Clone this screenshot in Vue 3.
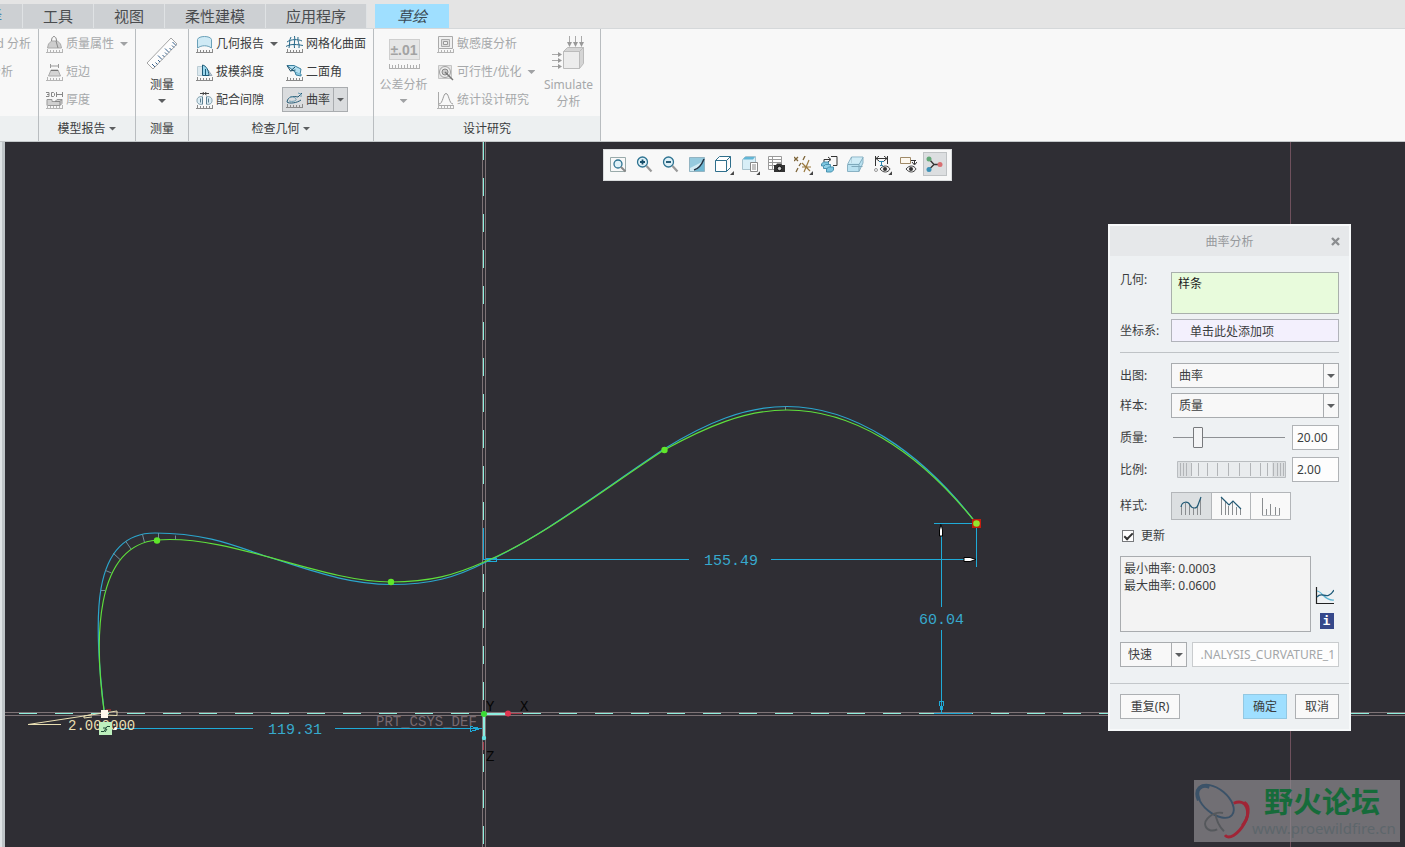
<script setup>
import { ref } from 'vue'

const tabs = ['工具', '视图', '柔性建模', '应用程序']
const ruler = 'M0 16.5H17M1.5 16v-3M4.5 16v-2M7.5 16v-2M10.5 16v-2M13.5 16v-2M16.5 16v-3'

const geometry = ref('样条')
const csys = ref('单击此处添加项')
const plot = ref('曲率')
const sample = ref('质量')
const quality = ref('20.00')
const qualitySlider = ref(20)
const scale = ref('2.00')
const scaleWheel = ref(50)
const update = ref(true)
const result = ref('最小曲率: 0.0003\n最大曲率: 0.0600')
const mode = ref('快速')
const featureName = ref('.NALYSIS_CURVATURE_1')
const wheelTicks = [3, 6, 9, 14, 21, 30, 40, 51, 62, 73, 83, 90, 96, 100, 103, 106]
const combs = 'M113 553l7 6.500M125.500 541l5.500 8M142.500 534.500l2 8M158.500 533v6M175.500 535.500v4M105.500 570.500l6 2.500M101 590.500h4M785.500 406v4'
</script>

<template>
  <div class="app">
    <nav class="tabs">
      <button class="tab cut">择</button>
      <button v-for="t in tabs" :key="t" class="tab">{{ t }}</button>
      <button class="tab active"><em>草绘</em></button>
    </nav>

    <header class="ribbon">
      <section class="group g-cut">
        <div class="g-body rows">
          <button class="cmd off">d 分析</button>
          <button class="cmd off short">分析</button>
        </div>
        <div class="g-label"></div>
      </section>

      <section class="group g-model">
        <div class="g-body rows">
          <button class="cmd off">
            <svg class="ic" viewBox="0 0 17 17"><path d="M1.500 12l1-4 3-3h6l3 3 1 4z" fill="#cdcdcd" stroke="#aaa" /><path d="M5.500 5c0-6 5-6 5 0M10 5l2 7" fill="none" stroke="#888" /><path :d="ruler" class="rl" /></svg>
            <span>质量属性</span><i class="arr"></i>
          </button>
          <button class="cmd off">
            <svg class="ic" viewBox="0 0 17 17"><path d="M4.500 0v4M12.500 0v4M5 2h7" fill="none" stroke="#999" /><path d="M2.500 12l2.500-6h7l2.500 6z" fill="#d4d4d4" stroke="#aaa" /><path d="M5 6.500h7" stroke="#777" /><path :d="ruler" class="rl" /></svg>
            <span>短边</span>
          </button>
          <button class="cmd off">
            <svg class="ic" viewBox="0 0 17 17"><path d="M0 .5h3v4H0M1 2.500h2M5.500 .5h2l1 1v2l-1 1h-2zM10.500 0v5M16.500 0v5M10 2.500h7" fill="none" stroke="#888" /><path d="M1 7.500h5v2h3l2-2h5v4l-2 2H1z" fill="#d0d0d0" stroke="#999" /><path d="M9 9.500h5l2-2M14 9.500v4" fill="none" stroke="#888" /><path :d="ruler" class="rl" /></svg>
            <span>厚度</span>
          </button>
        </div>
        <div class="g-label">模型报告<i class="arr"></i></div>
      </section>

      <section class="group g-measure">
        <div class="g-body">
          <button class="big">
            <svg class="ic-big" viewBox="0 0 34 34"><path d="M2 27L26 2l6 6L8 33z" fill="#fdfdfd" stroke="#a5a5a5" /><path d="M10 31l-3-3M12.500 28.500l-2-2M15 26l-2-2M17 23.500l-4-4M19.500 21l-2-2M22 18.500l-2-2M24 16.500l-4-4M26.500 14l-2-2M29 11.500l-2-2M31 9.500l-3.500-3.500" stroke="#35608c" fill="none" /></svg>
            <span>测量</span><i class="arr"></i>
          </button>
        </div>
        <div class="g-label">测量</div>
      </section>

      <section class="group g-check">
        <div class="g-body columns">
          <div class="rows col-check">
            <button class="cmd">
              <svg class="ic" viewBox="0 0 17 17"><path d="M1.500 12V3.500c1-4 13-4 14 0V12c-4-3-10-3-14 0z" fill="#cfeaf5" stroke="#6aa0b8" /><path :d="ruler" class="rl" /></svg>
              <span>几何报告</span><i class="arr"></i>
            </button>
            <button class="cmd">
              <svg class="ic" viewBox="0 0 17 17"><path d="M1.500 2.500h6v9h-6z" fill="#dce9ef" stroke="#bccdd5" /><path d="M12 6l4 5.500h-3z" fill="#c4d4da" stroke="#9ab" /><path d="M6.500 11.500V1c4 1 6 5 6.500 10.500z" fill="#9bd6ec" stroke="#1d5b78" /><path d="M9.500 5v6" stroke="#1d5b78" /><path :d="ruler" class="rl" /></svg>
              <span>拔模斜度</span>
            </button>
            <button class="cmd">
              <svg class="ic" viewBox="0 0 17 17"><path d="M4 1.500h9M6.500 0l2 1.500-2 1.500M10.500 0l-2 1.500 2 1.500" fill="none" stroke="#444" /><path d="M7 5c-3-1-6 0-6 3.500S4 13 7 12M10 5c3-1 6 0 6 3.500S13 13 10 12" fill="#dcedf5" stroke="#7f9dab" /><path d="M6.500 5v7M10.500 5v7M4.500 6.500v4M12.500 6.500v4" stroke="#5c7f90" /><path :d="ruler" class="rl" /></svg>
              <span>配合间隙</span>
            </button>
          </div>
          <div class="rows">
            <button class="cmd">
              <svg class="ic" viewBox="0 0 17 17"><path d="M1 6c4-3 11-3 15-1M0 10.500c5-3 11-2 17-1M5 1c-2 3-1 7-2 11M8.500 0c1 4-1 8 0 12M12 1c-1 4 2 7 1 11" fill="none" stroke="#27698a" /><path :d="ruler" class="rl" /></svg>
              <span>网格化曲面</span>
            </button>
            <button class="cmd">
              <svg class="ic" viewBox="0 0 17 17"><path d="M1 1.500h7l7 3.500-1 5.500-5-2.500z" fill="#b4e0f1" stroke="#3a7f9e" /><path d="M1 1.500l3.500 5.500 5-1M4.500 7l4.500-4" fill="none" stroke="#1c4f68" /><path d="M9 8l1 3 5 1v-2" fill="#8ccbe3" stroke="#3a7f9e" /><path :d="ruler" class="rl" /></svg>
              <span>二面角</span>
            </button>
            <button class="cmd pressed">
              <svg class="ic" viewBox="0 0 17 17"><path d="M1 11c1-6 6-6 11-5l4-4M1 11c2 2 10 1 14-2" fill="none" stroke="#235a75" /><path d="M3 7c2-2 6-1 7 1s-4 3-7 2M12 2l3 1v3" fill="none" stroke="#6d9db3" /><path :d="ruler" class="rl" /></svg>
              <span>曲率</span><b class="split"><i class="arr"></i></b>
            </button>
          </div>
        </div>
        <div class="g-label">检查几何<i class="arr"></i></div>
      </section>

      <section class="group g-study">
        <div class="g-body columns">
          <button class="big off">
            <svg class="ic-big" viewBox="0 0 34 34"><rect x="2.500" y="3.500" width="30" height="20" fill="#e6e6e6" stroke="#cfcfcf" /><path d="M2 32.500h31M2.500 32v-4M5.500 32v-3M8.500 32v-3M11.500 32v-4M14.500 32v-3M17.500 32v-3M20.500 32v-4M23.500 32v-3M26.500 32v-3M29.500 32v-3M32.500 32v-4" stroke="#b0b0b0" fill="none" /><text x="17" y="19" class="pm">±.01</text></svg>
            <span>公差分析</span><i class="arr"></i>
          </button>
          <div class="rows col-study">
            <button class="cmd off">
              <svg class="ic" viewBox="0 0 17 17"><path d="M1.500 .5h14v12h-14z" fill="#f0f0f0" stroke="#aaa" /><path d="M4.500 3.500h8v7h-8z" fill="#ddd" stroke="#aaa" /><path d="M6.500 5.500h4v3h-4z" fill="#eee" stroke="#999" /><path :d="ruler" class="rl" /></svg>
              <span>敏感度分析</span>
            </button>
            <button class="cmd off">
              <svg class="ic" viewBox="0 0 17 17"><path d="M1.500 1.500h13v13h-13z" fill="#e4e4e4" stroke="#c4c4c4" /><circle cx="8" cy="8" r="5.500" fill="#eee" stroke="#a0a0a0" /><circle cx="8" cy="8" r="3" fill="#ccc" stroke="#888" /><path d="M8 8l8 8" stroke="#777" stroke-width="1.500" /></svg>
              <span>可行性/优化</span><i class="arr"></i>
            </button>
            <button class="cmd off">
              <svg class="ic" viewBox="0 0 17 17"><path d="M1.500 0v13.500H17" fill="none" stroke="#aaa" /><path d="M2 12c4 0 4-10.500 7-10.500s3 10.500 7 10.500" fill="none" stroke="#999" /><path :d="ruler" class="rl" /></svg>
              <span>统计设计研究</span>
            </button>
          </div>
          <button class="big off">
            <svg class="ic-big" viewBox="0 0 34 34"><path d="M11.500 15.500h16v17h-16z" fill="#ececec" stroke="#bbb" /><path d="M11.500 15.500l4-4h16l-4 4zM27.500 15.500l4-4v16l-4 5z" fill="#d5d5d5" stroke="#bbb" /><path d="M17.500 0v9M23.500 0v9M29.500 0v9M0 18.500h9M0 24.500h9M0 30.500h9" stroke="#aaa" /><path d="M15 6h5l-2.500 5zM21 6h5l-2.500 5zM27 6h5l-2.500 5zM6 16v5l4-2.500zM6 22v5l4-2.500zM6 28v5l4-2.500z" fill="#999" /></svg>
            <span>Simulate</span><span class="second">分析</span>
          </button>
        </div>
        <div class="g-label">设计研究</div>
      </section>
    </header>

    <main class="canvas">
      <svg class="sketch" viewBox="0 142 1405 705" preserveAspectRatio="xMinYMin slice">
        <g fill="none" shape-rendering="crispEdges">
          <path d="M5 712.500H1405M5 715.500H1405M482.500 142V847M485.500 142V847" stroke="#7d7275" />
          <path d="M1290.500 142V847" stroke="#6f515d" />
          <path d="M19 713.500H1405M483.500 142V847" stroke="#8ff0de" stroke-dasharray="18 18" />
          <path d="M484 713.500h24M483.500 714v24" stroke="#8feee0" stroke-width="2" />
          <path d="M508 713.500h14M483.500 742v8" stroke="#a83c4c" />
        </g>
        <g fill="none" stroke="#1fabd8" shape-rendering="crispEdges">
          <path d="M484 559.500H689M771 559.500H976M976.500 524V567M934 523.500H976M941.500 524V607M941.500 630V713M115 728.500H253M335 728.500H482M483.500 528V560" />
          <path d="M486 558.500h10v3h-10M939.500 701v3l2 8 2-8v-3zM470 726.500v5l11-3zM934 713.500h38" />
        </g>
        <path d="M104.500 714C93 620 90 533 155 533C210 533 240 548 265 556C305 568 345 584.500 391 584.500C430 584.500 455 578 486 562C540 538 605 488 664 449C706 423 745 406.500 787 406.500C852 406.500 920 450 976 523" fill="none" stroke="#2ba6cd" stroke-width="1.200" />
        <path :d="combs" fill="none" stroke="#6f8c9a" />
        <path d="M104.500 714C94 640 94 546 157 540C230 534 320 582 391 582C430 582 455 575 484 562C540 539 600 492 664 450C706 427 745 410 787 410C850 410 915 447 976 523" fill="none" stroke="#5fe03c" stroke-width="1.200" />
        <g fill="#5fe62a">
          <circle cx="157" cy="540.500" r="3.200" /><circle cx="391" cy="582" r="3.200" /><circle cx="664.500" cy="450" r="3.200" />
        </g>
        <rect x="972" y="519" width="9" height="9" fill="#c41d0e" /><circle cx="976.500" cy="523.500" r="3.300" fill="#93e62e" />
        <path d="M964 557.500h6l6 2-6 2h-6z" fill="#fff" stroke="#000" />
        <path d="M939.500 536v-6l1.500-6 1.500 6v6z" fill="#fff" stroke="#000" />

        <text x="704" y="565" class="dim">155.49</text>
        <text x="919" y="624" class="dim">60.04</text>
        <text x="268" y="734" class="dim">119.31</text>
        <text x="376" y="726" class="csys">PRT_CSYS_DEF</text>
        <circle cx="484" cy="714" r="3" fill="#3bdc35" /><circle cx="508" cy="713.500" r="3" fill="#e03650" /><circle cx="484" cy="738" r="2.200" fill="#63e3e3" />
        <text x="486" y="711" class="axis">Y</text><text x="520" y="711" class="axis">X</text><text x="486" y="761" class="axis">Z</text>
        <path d="M61 724.500H28L117 711v4.500l-12-.5M92 714.500l-8 1.500v2l8-1" fill="none" stroke="#e9deb2" />
        <path d="M106 710h5" stroke="#d03030" />
        <text x="68" y="730" class="tan">2.000000</text>
        <rect x="101" y="710" width="7" height="8" fill="#fff7ec" />
        <rect x="99" y="722" width="13" height="13" fill="#bdf0bd" /><path d="M101 731.500h3l3-5h3M103 728h3M105 732l2-3" fill="none" stroke="#1c4a34" />
        <circle cx="115.500" cy="728.500" r="1.500" fill="#fff" />
      </svg>
      <div class="dock"></div>

      <div class="toolbar">
        <button aria-label="重新调整"><svg class="ic" viewBox="0 0 17 17"><path d="M.5 1.500h15v14H.5z" fill="none" stroke="#9aa" /><circle cx="8" cy="8" r="4" fill="#dff1f8" stroke="#2e7391" stroke-width="1.300" /><path d="M11 11l4.500 4.500" stroke="#888" stroke-width="2" /></svg></button>
        <button aria-label="放大"><svg class="ic" viewBox="0 0 17 17"><circle cx="6.500" cy="6" r="5" fill="#dff1f8" stroke="#2e7391" stroke-width="1.300" /><path d="M4 6h5M6.500 3.500v5" stroke="#174f6b" stroke-width="1.800" /><path d="M10.500 10l5 5.500" stroke="#999" stroke-width="2.200" /></svg></button>
        <button aria-label="缩小"><svg class="ic" viewBox="0 0 17 17"><circle cx="6.500" cy="6" r="5" fill="#dff1f8" stroke="#2e7391" stroke-width="1.300" /><path d="M4 6h5" stroke="#174f6b" stroke-width="1.800" /><path d="M10.500 10l5 5.500" stroke="#999" stroke-width="2.200" /></svg></button>
        <button aria-label="重画"><svg class="ic" viewBox="0 0 17 17"><path d="M.5 1.500h15v14H.5z" fill="#6fb7d2" stroke="#93b4c2" /><path d="M1 2h14c-1 6-5 11-10 13H1z" fill="#d3ebf4" /><path d="M1 2h14v3L1 12z" fill="#5aa9c8" opacity=".5" /><path d="M5 14c4-1 8-6 10-11" stroke="#234" fill="none" stroke-width="1.500" /></svg></button>
        <button aria-label="显示样式"><svg class="ic" viewBox="0 0 17 17"><path d="M.5 4.500h11v11H.5zM.5 4.500l4-4h11l-4 4M15.500 .5v11l-4 4" fill="#fff" stroke="#2f6f8c" /></svg><u></u></button>
        <button aria-label="已保存方向"><svg class="ic" viewBox="0 0 17 17"><path d="M.5 3.500l3-3h10v12l-2 1H.5z" fill="#d8eef7" stroke="#a9c2cd" /><path d="M3 1h10l-2 2.500H1z" fill="#62b6d6" /><path d="M8.500 6.500h7v9h-7z" fill="#fff" stroke="#888" /><path d="M10 9h4M10 11h4M10 13h4" stroke="#888" /></svg><u></u></button>
        <button aria-label="视图管理器"><svg class="ic" viewBox="0 0 17 17"><path d="M.5 .5h13v13H.5zM.5 3.500h13M.5 6.500h13M.5 9.500h13M4.500 .5v13" fill="#fff" stroke="#9a9a9a" /><path d="M6 9h2l1-1.500h4L14 9h3v7H6z" fill="#333" /><circle cx="11.500" cy="12.500" r="2.200" fill="#ccc" stroke="#111" /></svg></button>
        <button aria-label="基准显示"><svg class="ic" viewBox="0 0 17 17"><path d="M0 1l4 4M4 1L0 5M11 0L9 4M7 7l-2 3M4 12l-2 4" stroke="#7d6438" stroke-width="1.300" /><path d="M15 4l-5 12M8 7l8 8M8 11h9" stroke="#9b7a3e" stroke-width="1.200" /></svg><u></u></button>
        <button aria-label="注释方向"><svg class="ic" viewBox="0 0 17 17"><path d="M3 6V3.500h6M7 1l3 2.500L7 6M10 .5h6v9h-4" fill="none" stroke="#333" /><path d="M.5 8l2-2h5v4h-7z" fill="#7cc5e0" stroke="#4a93b0" /><path d="M2.500 10.500l2-2h5v4h-7z" fill="#8fd0e8" stroke="#4a93b0" /><path d="M5.500 13l2-2h5v3l-2 2h-5z" fill="#7cc5e0" stroke="#4a93b0" /></svg></button>
        <button aria-label="透明"><svg class="ic" viewBox="0 0 17 17"><path d="M.5 8.500l4-7.500h11.500v6l-4 8.500H.5z" fill="#b9e1f0" stroke="#8ab2c4" /><path d="M1 8.500h11M12 8.500l4-7M12 8.500v7M4.500 1v6M4.500 10.500h11" stroke="#7fa9bb" fill="none" /><path d="M5 1.500h10.500l-3.500 6H1.500z" fill="#dff3fa" opacity=".6" /></svg></button>
        <button aria-label="尺寸显示"><svg class="ic" viewBox="0 0 17 17"><path d="M1.500 0v10M13.500 0v8M2 2.500h11M5 0L2 2.500 5 5M10 0l3 2.500L10 5" fill="none" stroke="#333" /><path d="M5 5.500h5M7.500 5v5M6 9.500h3" stroke="#2f87ad" /><circle cx="2" cy="14" r="1.500" fill="none" stroke="#999" /><path d="M6 13c3-4 8-4 10 0-2 4-7 4-10 0z" fill="#eee" stroke="#444" /><circle cx="11" cy="13" r="2" fill="#333" /></svg><u></u></button>
        <button aria-label="约束显示"><svg class="ic" viewBox="0 0 17 17"><path d="M.5 1.500h10v6H.5z" fill="#fdf8ef" stroke="#a08a68" /><path d="M11 4.500h5M14.500 4v4M12 6l2.500 3L17 6" stroke="#333" fill="none" /><path d="M6 13c3-4 8-4 10 0-2 4-7 4-10 0z" fill="#eee" stroke="#444" /><circle cx="11" cy="13" r="2" fill="#333" /></svg></button>
        <button aria-label="顶点显示" class="on"><svg class="ic" viewBox="0 0 17 17"><path d="M3 3l5 5.500h6M8 8.500l-5 5" fill="none" stroke="#333" stroke-width="1.300" /><circle cx="3" cy="3" r="2.500" fill="#62a877" /><circle cx="14" cy="8.500" r="2.500" fill="#d86f72" /><circle cx="3" cy="13.500" r="2.500" fill="#3c91b6" /></svg></button>
      </div>

      <form class="dialog" @submit.prevent>
        <div class="d-head"><span>曲率分析</span><button type="button" class="close" aria-label="关闭"><svg viewBox="0 0 9 9"><path d="M1 1l7 7M8 1L1 8" stroke="#8b8d90" stroke-width="2.400" /></svg></button></div>
        <div class="d-body">
          <div class="row geo"><label for="geo">几何:</label><textarea id="geo" v-model="geometry" class="collect"></textarea></div>
          <div class="row"><label for="csys">坐标系:</label><input id="csys" v-model="csys" class="csys-in"></div>
          <hr>
          <div class="row"><label for="plot">出图:</label><div class="select"><select id="plot" v-model="plot"><option>曲率</option></select><i class="arr"></i></div></div>
          <div class="row"><label for="sample">样本:</label><div class="select"><select id="sample" v-model="sample"><option>质量</option></select><i class="arr"></i></div></div>
          <div class="row num"><label for="quality">质量:</label><input v-model="qualitySlider" type="range" class="slider" aria-label="质量滑块"><input id="quality" v-model="quality" class="box"></div>
          <div class="row num"><label for="scale">比例:</label>
            <div class="wheel">
              <svg viewBox="0 0 109 17" preserveAspectRatio="none"><path d="M.5 .5h108v16H.5z" fill="#e9ecee" stroke="#b9bdc0" /><path d="M1 1h13v15H1zM95 1h13v15H95z" fill="#dcdfe1" /><path v-for="x in wheelTicks" :key="x" :d="`M${x + 0.5} 2v13`" stroke="#b2b5b8" /></svg>
              <input v-model="scaleWheel" type="range" aria-label="比例滚轮">
            </div>
            <input id="scale" v-model="scale" class="box"></div>
          <div class="row style"><span>样式:</span>
            <div class="styles">
              <button type="button" class="on" aria-label="曲线"><svg viewBox="0 0 22 20"><path d="M1.500 19V10M5.500 19V7M9.500 19V9M13.500 19v-7M17.500 19V9M20.500 19V2" stroke="#8a8d90" /><path d="M1 11c1-6 7-6 9-2s7 4 8 0l3-8" fill="none" stroke="#235a75" stroke-width="1.200" /></svg></button>
              <button type="button" aria-label="折线"><svg viewBox="0 0 22 20"><path d="M1.500 19V1M5.500 19V6M8.500 19v-9M12.500 19V6M16.500 19v-8M20.500 19v-6" stroke="#8a8d90" /><path d="M1 1l8 8 4-4 8 8" fill="none" stroke="#235a75" stroke-width="1.200" /></svg></button>
              <button type="button" aria-label="线条"><svg viewBox="0 0 22 20"><path d="M2.500 19V2M6.500 19v-6M10.500 19V8M15.500 19v-8M19.500 19v-7" stroke="#8a8d90" /><path d="M2 19.500h18" stroke="#b9bcbf" /></svg></button>
            </div>
          </div>
          <label class="check"><input v-model="update" type="checkbox"><span>更新</span></label>
          <div class="result">
            <textarea v-model="result" aria-label="结果" readonly></textarea>
            <div class="side">
              <button type="button" aria-label="图形"><svg viewBox="0 0 19 18"><path d="M1.500 0v16.500H19" fill="none" stroke="#222" stroke-width="1.200" /><path d="M2 4c5 0 7 10 17 9" fill="none" stroke="#5bb4d3" stroke-width="1.200" /><path d="M2 10c5-7 10 5 17-7" fill="none" stroke="#1f5a78" stroke-width="1.300" /></svg></button>
              <button type="button" class="info">i</button>
            </div>
          </div>
          <div class="save">
            <div class="select narrow"><select v-model="mode" aria-label="分析类型"><option>快速</option></select><i class="arr"></i></div>
            <input v-model="featureName" aria-label="名称" disabled>
          </div>
        </div>
        <div class="d-foot">
          <button type="button" class="repeat">重复(R)</button>
          <button type="submit" class="ok">确定</button>
          <button type="button">取消</button>
        </div>
      </form>

      <div class="brand">
        <svg class="rings" viewBox="0 0 60 62"><ellipse cx="22.500" cy="21" rx="12.500" ry="22" transform="rotate(-50 22.500 21)" fill="none" stroke="#3b5268" stroke-width="2" /><path d="M5 20C0 8 8 3 16 6" fill="none" stroke="#3b5268" stroke-width="4" /><path d="M41 23c14-6 18 10 11 21-6 11-16 17-20 12" fill="none" stroke="#a02536" stroke-width="3" /><path d="M52 22c7 4 4 17-2 24" fill="none" stroke="#a02536" stroke-width="3" /><path d="M30 33c-10-2-21 7-18 14 2 5 8 5 12 3M22 33c1 8 4 14 9 19" fill="none" stroke="#55585c" stroke-width="2" /></svg>
        <div class="words"><strong>野火论坛</strong><a href="#">www.proewildfire.cn</a></div>
      </div>
    </main>
  </div>
</template>

<style>
body { margin: 0; }
</style>

<style scoped>
* { box-sizing: border-box; }
.app { min-height: 100vh; display: flex; flex-direction: column; font: 12px/16px "Noto Sans", "Noto Sans CJK SC", sans-serif; color: #3b3d40; }
button, input, select, textarea { font: inherit; color: inherit; margin: 0; border-radius: 0; }
button { border: 0; background: none; padding: 0; white-space: nowrap; }
svg { display: block; }

.tabs { display: flex; height: 28px; padding-top: 4px; background: #e4e4e4; overflow: hidden; }
.tab { padding: 0 20px; font-size: 15px; line-height: 22px; background: #cdd0d3; color: #4a4c4f; border-right: 1px solid #dfe2e4; }
.tab.cut { width: 23px; padding: 0 20px 0 0; display: flex; justify-content: flex-end; color: #4683a8; overflow: hidden; }
.tab.active { margin-left: 8px; padding: 0 22px; background: #9fdfff; color: #3b4a54; border: 0; }

.ribbon { display: flex; height: 114px; background: #f8f8f8; border-top: 1px solid #d5d8da; border-bottom: 1px solid #c4c8ca; }
.group { display: flex; flex-direction: column; border-right: 1px solid #b9bdc0; }
.g-cut { width: 39px; overflow: hidden; }
.g-model { width: 97px; }
.g-measure { width: 53px; }
.g-check { width: 185px; }
.g-study { width: 227px; }
.g-body { flex: 1; min-height: 0; padding: 1px 3px 0; }
.g-cut .g-body { padding: 1px 3px 0 0; align-items: flex-end; }
.columns { display: flex; padding: 1px 0 0; }
.rows { display: flex; flex-direction: column; align-items: flex-start; }
.col-check { width: 93px; padding-left: 3px; }
.col-study { width: 106px; }
.g-label { display: flex; align-items: center; justify-content: center; gap: 3px; height: 25px; background: #edf0f1; }
.cmd { display: flex; align-items: center; gap: 3px; height: 28px; padding: 0 4px; flex: none; }
.cmd.short { padding-right: 22px; }
.cmd .arr { margin-left: 3px; }
.ic { width: 17px; height: 17px; flex: none; }
.rl { fill: none; stroke: #8a8a8a; }
.off { color: #a6a8aa; }
.off .rl { stroke: #b5b5b5; }
.arr { display: inline-block; width: 8px; height: 4px; background: #5c5e60; clip-path: polygon(0 0, 100% 0, 50% 100%); flex: none; }
.off .arr { background: #a0a2a4; }
.cmd.pressed { height: 25px; margin-top: 1px; padding: 0 0 0 3px; background: #dadcde; border: 1px solid #a9acaf; }
.split { display: flex; align-items: center; justify-content: center; align-self: stretch; width: 14px; border-left: 1px solid #a9acaf; }
.split .arr, .cmd .split .arr { margin: 0; }
.big { display: flex; flex-direction: column; align-items: center; width: 100%; padding-top: 6px; }
.columns .big { width: 59px; flex: none; }
.big > span { margin-top: 7px; }
.big > .second { margin-top: 1px; }
.big .arr { margin-top: 6px; }
.ic-big { width: 34px; height: 34px; }
.pm { font: 700 14px "Liberation Sans", sans-serif; fill: #a3a3a3; text-anchor: middle; }

.canvas { position: relative; flex: 1; min-height: 705px; background: #2f2e34; overflow: hidden; }
.sketch { position: absolute; inset: 0; width: 100%; height: 100%; }
.dock { position: absolute; left: 0; top: 0; bottom: 0; width: 5px; background: #dfe4e6; border-right: 3px solid #bfc5c8; }
.dim, .csys, .tan { font-family: "Liberation Mono", monospace; font-size: 15px; fill: #37a9cd; }
.csys { font-size: 14px; fill: #77696f; }
.tan { font-size: 14px; fill: #e9deb2; }
.axis { font: 14px "Liberation Mono", monospace; fill: #050505; }

.toolbar { position: absolute; left: 603px; top: 7px; display: grid; grid-template-columns: repeat(13, 1fr); align-items: center; width: 349px; height: 32px; padding: 0 3px 2px 1px; background: #f8f8f8; border: 1px solid #d9dbdd; }
.toolbar button { position: relative; display: flex; align-items: center; justify-content: center; height: 24px; margin: 0 1px; border: 1px solid transparent; }
.toolbar .on { background: #dcdee0; border-color: #bfc2c4; }
.toolbar u { position: absolute; right: 1px; bottom: 0; width: 4px; height: 4px; background: #444; clip-path: polygon(100% 0, 100% 100%, 0 100%); }

.dialog { position: absolute; right: 54px; top: 82px; width: 243px; background: #eef1f3; border: 2px solid #f7f9fa; }
.d-head { display: flex; align-items: center; justify-content: center; position: relative; height: 30px; padding-top: 2px; background: #e6e8ea; color: #96999c; }
.close { position: absolute; right: 9px; top: 11px; }
.close svg { width: 9px; height: 9px; }
.d-body { display: flex; flex-direction: column; padding: 16px 10px; }
.row { display: grid; grid-template-columns: 51px 1fr; align-items: center; margin-bottom: 5px; }
.row.geo { align-items: start; }
.row.num { grid-template-columns: 51px 1fr 47px; margin: 2px 0 5px; }
.row.style { margin: 5px 0 8px; }
textarea { display: block; resize: none; outline: 0; }
.collect { width: 100%; height: 42px; padding: 3px 6px; background: #e8fbdc; border: 1px solid #a9b0ac; color: #222; }
.csys-in { width: 100%; height: 23px; padding: 0 18px; background: #f3f0fd; border: 1px solid #b1b3ba; }
hr { width: 100%; height: 1px; margin: 5px 0 10px; border: 0; background: #bfc3c6; }
.select { position: relative; display: flex; height: 25px; }
.select select { appearance: none; width: 100%; padding: 0 7px; background: #f8f8f8; border: 1px solid #a9acaf; }
.select .arr { position: absolute; right: 4px; top: 11px; }
.select::after { content: ""; position: absolute; right: 15px; top: 0; bottom: 0; border-left: 1px solid #a9acaf; }
.box { width: 47px; height: 25px; padding: 0 4px; background: #fdfdfd; border: 1px solid #b0b3b6; }
.slider { appearance: none; width: 112px; height: 21px; margin-left: 2px; background: linear-gradient(#8e9194, #8e9194) center / 100% 1px no-repeat; }
.slider::-webkit-slider-thumb { appearance: none; width: 10px; height: 21px; background: #f4f5f6; border: 1px solid #77797c; border-radius: 1px; }
.wheel { position: relative; margin: 0 6px; height: 17px; }
.wheel svg { width: 109px; height: 17px; }
.wheel input { position: absolute; inset: 0; width: 100%; opacity: 0; }
.styles { display: flex; width: 120px; height: 28px; }
.styles button { flex: 1; display: flex; align-items: center; justify-content: center; background: #f9f9f9; border: 1px solid #b3b6b9; border-left-width: 0; }
.styles button:first-child { border-left-width: 1px; }
.styles button.on { background: #dcdfe1; }
.styles svg { width: 22px; height: 20px; fill: none; }
.check { display: flex; align-items: center; gap: 7px; margin: 0 0 12px 2px; }
.check input { appearance: none; width: 12px; height: 12px; background: #fff; border: 1px solid #77797c; display: flex; }
.check input:checked::before { content: ""; width: 7px; height: 3px; margin: 2px 0 0 1px; border-left: 2px solid #333; border-bottom: 2px solid #333; transform: rotate(-45deg); }
.result { display: flex; gap: 4px; }
.result textarea { width: 191px; height: 76px; padding: 3px; line-height: 17px; background: #f3f3f3; border: 1px solid #a9acaf; }
.side { display: flex; flex-direction: column; justify-content: flex-end; gap: 8px; padding-bottom: 3px; }
.side svg { width: 19px; height: 18px; }
.info { align-self: center; margin-left: 4px; width: 14px; height: 16px; background: #36488a; color: #fff; font: 700 13px/16px "DejaVu Sans Mono", monospace; }
.save { display: flex; gap: 5px; margin-top: 10px; }
.narrow { width: 67px; }
.save > input { flex: 1; min-width: 0; height: 25px; padding: 0 3px; background: #fdfdfd; border: 1px solid #c9ccce; color: #a3a6a8; text-align: right; }
.d-foot { display: flex; gap: 8px; padding: 10px; border-top: 1px solid #c3c7ca; }
.d-foot button { height: 25px; width: 44px; background: #f9f9f9; border: 1px solid #adb0b3; }
.d-foot .repeat { width: 60px; margin-right: auto; }
.d-foot .ok { background: #9fdfff; border-color: #93c8e2; }

.brand { position: absolute; right: 5px; bottom: 5px; display: flex; width: 206px; height: 62px; background: #8b898eb8; overflow: hidden; }
.rings { width: 58px; height: 62px; flex: none; }
.words { display: flex; flex-direction: column; align-items: flex-start; flex: 1; }
.words strong { margin: 3px 0 0 12px; font: 700 29px/35px "Noto Sans CJK SC", sans-serif; color: #166b3a; }
.words a { font: 15px/20px "Noto Sans", sans-serif; color: #5d666b; text-decoration: none; }
</style>
